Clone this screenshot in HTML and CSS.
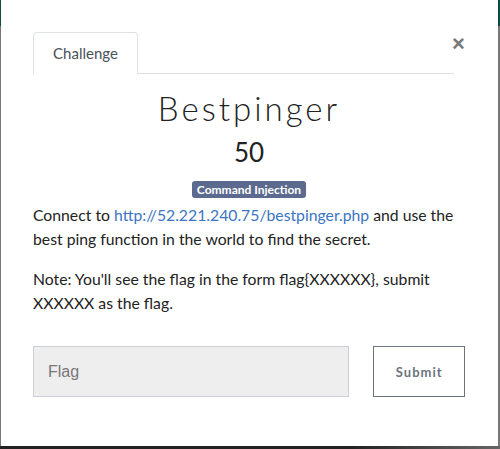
FILE: index.html
```html
<!DOCTYPE html>
<html>
<head>
<meta charset="utf-8">
<link rel="stylesheet" href="styles.css">
</head>
<body>
<div class="navstrip"></div>
<div class="modal">
  <div class="tabs">
    <div class="tab">Challenge</div>
    <div class="tab-line"></div>
    <div class="close">&times;</div>
  </div>
  <div class="body">
    <h1 class="title">Bestpinger</h1>
    <div class="value">50</div>
    <div class="tags"><span class="badge">Command Injection</span></div>
    <p>Connect to <a href="#">http://52.221.240.75/bestpinger.php</a> and use the best ping function in the world to find the secret.</p>
    <p>Note: You'll see the flag in the form flag{XXXXXX}, submit XXXXXX as the flag.</p>
    <div class="form">
      <input class="flag" type="text" placeholder="Flag">
      <button class="submit">Submit</button>
    </div>
  </div>
</div>
<div class="bottomstrip"></div>
</body>
</html>
```
FILE: styles.css
```css
html, body {
  margin: 0;
  padding: 0;
  height: 449px;
  overflow: hidden;
}
body {
  background: #777;
  font-family: "Lato", "Liberation Sans", sans-serif;
  color: #212529;
}
.navstrip {
  height: 26px;
  background: #0d4a43;
}
.bottomstrip {
  height: 3px;
  background: linear-gradient(to right, #222 0, #222 70%, #666 100%);
}
.modal {
  position: relative;
  margin-top: -26px;
  margin-left: 1px;
  width: 497px;
  height: 446px;
  background: #fff;
  box-sizing: border-box;
  padding-top: 32px;
}
.tabs {
  display: flex;
  align-items: flex-end;
  margin-left: 32px;
  height: 42px;
  position: relative;
}
.tab {
  box-sizing: border-box;
  width: 105px;
  height: 42px;
  border: 1px solid #dee2e6;
  border-bottom: none;
  border-radius: 4px 4px 0 0;
  font-size: 15px;
  color: #495057;
  text-align: center;
  line-height: 41px;
}
.tab-line {
  width: 316px;
  border-bottom: 1px solid #dee2e6;
}
.close {
  position: absolute;
  left: 419px;
  top: 1px;
  font-size: 22px;
  font-weight: bold;
  color: #777;
  font-family: "Liberation Sans", sans-serif;
  line-height: 22px;
}
.body {
  padding: 0 33px 0 32px;
}
.title {
  margin: 14px 0 0;
  text-align: center;
  font-weight: 300;
  font-size: 33px;
  letter-spacing: 3px;
  line-height: 40px;
  color: #222;
}
.value {
  text-align: center;
  font-size: 26px;
  line-height: 34px;
  margin-top: 7px;
  color: #222;
}
.tags {
  text-align: center;
  margin-top: 10px;
  line-height: 17px;
}
.badge {
  display: inline-block;
  background: #5b6a8e;
  color: #fff;
  font-weight: bold;
  font-size: 12px;
  padding: 0 5px;
  border-radius: 3px;
  height: 17px;
  line-height: 17px;
}
p {
  margin: 0 0 16px;
  font-size: 15.75px;
  line-height: 24px;
  color: #222;
}
.tags + p {
  margin-top: 5px;
}
a {
  color: #3b74c4;
  text-decoration: none;
}
.form {
  display: flex;
  margin-top: 31px;
}
.flag {
  box-sizing: border-box;
  width: 318px;
  height: 51px;
  background: #eee;
  border: 1px solid #ccd0d6;
  padding: 0 14px;
  font-family: "Liberation Sans", sans-serif;
  font-size: 16px;
  outline: none;
}
.flag::placeholder {
  color: #777;
}
.submit {
  box-sizing: border-box;
  margin-left: 24px;
  width: 92px;
  height: 51px;
  background: #fff;
  border: 1px solid #6c737f;
  font-family: "Lato", sans-serif;
  font-weight: bold;
  font-size: 13px;
  letter-spacing: 1px;
  color: #6c757d;
}
```
